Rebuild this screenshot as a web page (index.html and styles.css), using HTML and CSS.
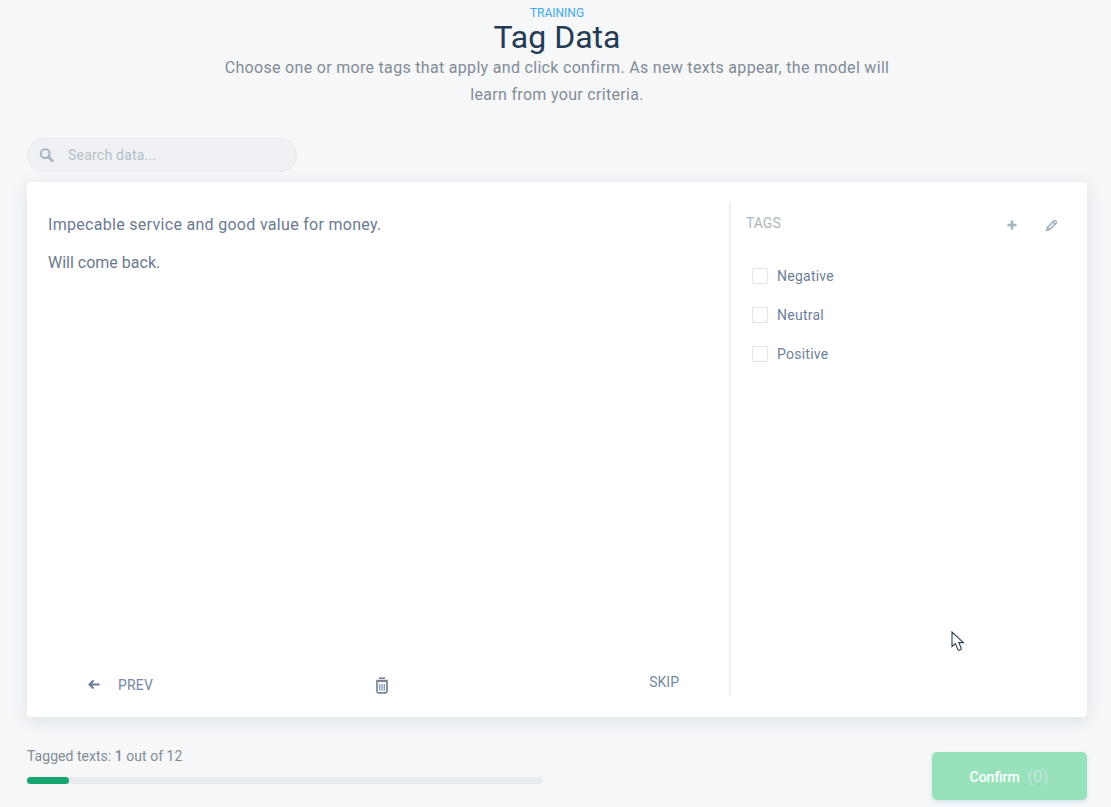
FILE: index.html
```html
<!DOCTYPE html>
<html lang="en">
<head>
  <meta charset="UTF-8">
  <meta name="viewport" content="width=device-width, initial-scale=1.0">
  <title>Tag Data</title>
  <link rel="stylesheet" href="styles.css">
</head>
<body>
  <div class="page">

    <!-- Heading -->
    <header class="heading">
      <div class="eyebrow">TRAINING</div>
      <h1>Tag Data</h1>
      <p>Choose one or more tags that apply and click confirm. As new texts appear, the model will learn from your criteria.</p>
    </header>

    <!-- Search -->
    <div class="search">
      <svg class="search-icon" width="15" height="16" viewBox="0 0 16 16"><circle cx="6.6" cy="6.6" r="4.7" fill="none" stroke="#a9b8c0" stroke-width="2.3"/><path d="M10.2 10.2 L14.2 14.2" stroke="#a9b8c0" stroke-width="3" stroke-linecap="round"/></svg>
      <span class="search-text">Search data...</span>
    </div>

    <!-- Main card -->
    <main class="card">
      <section class="sample">
        <div class="sample-text">
          <p>Impecable service and good value for money.</p>
          <p class="sample-short">Will come back.</p>
        </div>
        <div class="sample-nav">
          <div class="nav-prev">
            <svg width="14" height="12" viewBox="0 0 14 12"><path d="M12.5 5.5 H2.5 M6.5 1.5 L2.5 5.5 L6.5 9.5" fill="none" stroke="#6b7a90" stroke-width="2"/></svg>
            <span>PREV</span>
          </div>
          <svg class="nav-trash" width="14" height="17" viewBox="0 0 14 17"><path d="M4 1.2 H10" stroke="#7a8494" stroke-width="1.6"/><rect x="1" y="2.8" width="12" height="2.2" rx="1" fill="#7a8494"/><path d="M2 4.8 V14.3 Q2 15.8 3.5 15.8 H10.5 Q12 15.8 12 14.3 V4.8" fill="none" stroke="#7a8494" stroke-width="1.7"/><path d="M4.7 7 V13.8 M7 7 V13.8 M9.3 7 V13.8" stroke="#7f9bbd" stroke-width="1.3"/></svg>
          <div class="nav-skip">SKIP</div>
        </div>
      </section>

      <aside class="tags">
        <div class="tags-head">
          <span class="tags-title">TAGS</span>
          <div class="tags-actions">
            <svg width="12" height="12" viewBox="0 0 12 12"><path d="M6 1.5 V10.5 M1.5 6 H10.5" stroke="#a3b5bd" stroke-width="2.6"/></svg>
            <svg width="13" height="13" viewBox="0 0 13 13"><path d="M1.5 11.5 L2.3 8.3 L8.8 1.8 Q9.6 1 10.5 1.8 L11.2 2.5 Q12 3.4 11.2 4.2 L4.7 10.7 Z M7.8 2.8 L10.2 5.2 M2.3 8.3 L4.7 10.7" fill="#e4e9ec" stroke="#a3b0b8" stroke-width="1.3"/></svg>
          </div>
        </div>
        <ul class="tag-list">
          <li><span class="box"></span>Negative</li>
          <li><span class="box"></span>Neutral</li>
          <li><span class="box"></span>Positive</li>
        </ul>
      </aside>
    </main>

    <!-- Footer -->
    <footer class="bottom">
      <div class="progress-wrap">
        <div class="progress-label">Tagged texts: <b>1</b> out of 12</div>
        <div class="progress"><div class="progress-fill" style="width: 8.1%"></div></div>
      </div>
      <button class="confirm">Confirm <span>(0)</span></button>
    </footer>
  </div>

  <!-- Mouse pointer caught in the screenshot -->
  <svg class="pointer" width="14" height="21" viewBox="0 0 14 21"><path d="M1 1 V15.5 L4.4 12.6 L6.8 18.4 Q7.3 19.6 8.6 19 L9.6 18.5 Q10.6 18 10.1 16.9 L7.8 11.6 L12.4 11.6 Z" fill="#fff" stroke="#2c3e50" stroke-width="1.1"/></svg>
</body>
</html>
```

FILE: styles.css
```css
* {
  box-sizing: border-box;
}
html, body {
  height: 100%;
}
body {
  margin: 0;
  background-color: #f5f7f9;
  color: #6b7a90;
  font-family: Roboto, "Open Sans", sans-serif;
  overflow: hidden;
}
.page {
  width: 1060px;
  margin-left: 27px;
}

/* Heading */
.heading {
  text-align: center;
  padding-top: 6px;
  height: 138px;
}
.eyebrow {
  color: #3ea9ec;
  font-size: 12px;
  line-height: 14px;
}
.heading h1 {
  margin: 0;
  color: #243b53;
  font-size: 32px;
  font-weight: 400;
  line-height: 34px;
}
.heading p {
  width: 680px;
  margin: 0 auto;
  color: #838b97;
  font-size: 16px;
  line-height: 27px;
  letter-spacing: 0.31px;
}

/* Search */
.search {
  display: flex;
  align-items: center;
  width: 270px;
  height: 34px;
  padding-left: 11px;
  margin-bottom: 10px;
  background-color: #eff1f4;
  border: 1px solid #e6eaee;
  border-radius: 17px;
}
.search-text {
  margin-left: 14px;
  color: #b2bfc7;
  font-size: 14px;
  letter-spacing: 0.22px;
}

/* Card */
.card {
  display: flex;
  height: 535px;
  padding: 21px 0;
  background-color: #fff;
  border-radius: 4px;
  box-shadow: 0 4px 16px rgba(170, 182, 196, 0.32);
}
.sample {
  display: flex;
  flex-direction: column;
  justify-content: space-between;
  width: 702px;
  padding-left: 21px;
}
.sample-text {
  padding-top: 12px;
}
.sample-text p {
  margin: 0 0 19px;
  font-size: 16px;
  line-height: 19px;
  letter-spacing: 0.3px;
}
.sample-text .sample-short {
  letter-spacing: 0;
}
.sample-nav {
  display: flex;
  align-items: center;
  justify-content: space-between;
  height: 20px;
  padding: 0 50px 0 39px;
  margin-bottom: 1px;
  font-size: 14px;
  color: #7288a4;
}
.nav-prev {
  display: flex;
  align-items: center;
  gap: 17px;
  letter-spacing: 0.2px;
}
.nav-trash {
  margin-left: -39px;
}
.nav-skip {
  margin-top: -6px;
}

/* Tags column */
.tags {
  flex: 1;
  padding: 0 29px 0 15px;
  border-left: 2px solid #edeff3;
}
.tags-head {
  display: flex;
  justify-content: space-between;
  align-items: center;
  height: 40px;
  margin-bottom: 13px;
  color: #a9b8c0;
  font-size: 14px;
}
.tags-actions {
  display: flex;
  align-items: center;
  gap: 27px;
  margin-top: 4px;
}
.tag-list {
  margin: 0;
  padding: 0 0 0 6px;
  list-style: none;
}
.tag-list li {
  display: flex;
  align-items: center;
  height: 39px;
  font-size: 14px;
  letter-spacing: 0.25px;
  color: #6d7f99;
}
.box {
  width: 16px;
  height: 16px;
  margin-right: 9px;
  background-color: #fff;
  border: 1px solid #dfe4e8;
  border-radius: 2px;
}

/* Bottom bar */
.bottom {
  display: flex;
  justify-content: space-between;
  margin-top: 35px;
}
.progress-wrap {
  width: 516px;
}
.progress-label {
  color: #838b97;
  font-size: 14px;
  line-height: 17px;
  margin-top: -4px;
  letter-spacing: 0.03px;
}
.progress-label b {
  font-weight: 500;
}
.progress {
  height: 7px;
  margin-top: 12px;
  background-color: #e9ecef;
  border-radius: 4px;
}
.progress-fill {
  height: 100%;
  background-color: #17a56f;
  border-radius: 4px;
}
.confirm {
  width: 155px;
  height: 48px;
  padding-right: 7px;
  background-color: #98e2bb;
  border: none;
  border-radius: 5px;
  box-shadow: 0 2px 4px rgba(170, 200, 220, 0.4);
  color: #fff;
  font-family: inherit;
  font-size: 14px;
  font-weight: 500;
}
.confirm span {
  margin-left: 4px;
  color: #c4e3e0;
  font-size: 17px;
  font-weight: 400;
}

/* Pointer over the card */
.pointer {
  position: absolute;
  left: 951px;
  top: 631px;
}
```
